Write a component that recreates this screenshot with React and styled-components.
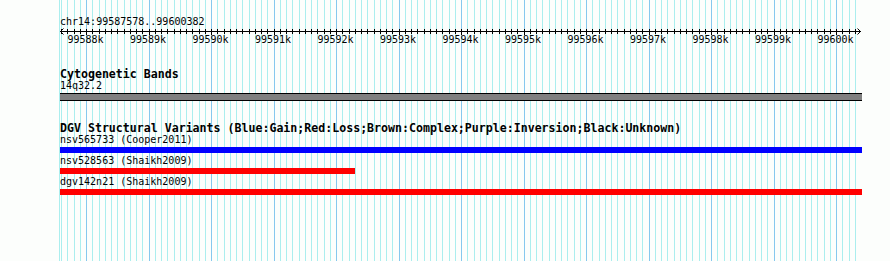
import React from "react";
import styled, { createGlobalStyle } from "styled-components";

const GlobalStyle = createGlobalStyle`
  html, body { margin: 0; padding: 0; background: #fcfefc; }
  body { font-family: "DejaVu Sans Mono", "Liberation Mono", monospace; color: #000; }
`;

const START = 99587578;
const END = 99600382;
const ORIGIN = 60.2;
const BP_PER_PX = 16;
const toX = (bp) => ORIGIN + (bp - START) / BP_PER_PX;

const Stage = styled.div`
  width: 890px;
  height: 261px;
  display: grid;
  overflow: hidden;
  > * { grid-area: 1 / 1; }
`;

const GridSvg = styled.svg`
  display: block;
  width: 890px;
  height: 261px;
`;

const Content = styled.div`
  display: flex;
  flex-direction: column;
  padding: 16px 0 0 60px;
  position: relative;
`;

const Label = styled.div`
  font-size: 10px;
  line-height: 12px;
  height: 12px;
  white-space: nowrap;
  margin-top: ${(p) => p.$mt || 0}px;
`;

const Title = styled.div`
  font-size: 11.6px;
  font-weight: bold;
  line-height: 12px;
  height: 12px;
  white-space: nowrap;
  margin-top: ${(p) => p.$mt || 0}px;
`;

const RulerSvg = styled.svg`
  display: block;
  width: 810px;
  height: 20px;
  margin-left: -2px;
`;

const BandBar = styled.div`
  width: 802px;
  height: 6px;
  margin-top: 1px;
  background: #808080;
  border-top: 1px solid #000;
  border-bottom: 1px solid #000;
`;

const FeatureRow = styled.div`
  display: flex;
  flex-direction: column;
  height: 21px;
`;

const FeatureBar = styled.div`
  height: 6px;
  margin-top: 1px;
  background: ${(p) => p.$color};
`;

function Grid() {
  const lines = [];
  lines.push(<rect key="edge" x={59} y={0} width={1} height={261} fill="#aaeeee" />);
  for (let bp = 99587600; bp <= 99600300; bp += 100) {
    const x = Math.round(toX(bp) - 0.5);
    const major = bp % 1000 === 0;
    lines.push(
      <rect key={bp} x={x} y={0} width={1} height={261} fill={major ? "#86c8ee" : "#aaeeee"} />
    );
  }
  return (
    <GridSvg viewBox="0 0 890 261" shapeRendering="crispEdges">
      {lines}
    </GridSvg>
  );
}

function Ruler() {
  // local coords: x offset -58 (svg starts at page x 58)
  const off = 58;
  const ticks = [];
  const labels = [];
  for (let bp = 99587600; bp <= 99600300; bp += 100) {
    const x = Math.round(toX(bp) - 0.5) - off + 0.5;
    const major = bp % 1000 === 0;
    ticks.push(
      <line key={bp} x1={x} x2={x} y1={major ? 1 : 1} y2={major ? 7 : 6} stroke="#000" strokeWidth="1" />
    );
    if (major) {
      labels.push(
        <text
          key={"l" + bp}
          x={toX(bp) - off - 1}
          y={15}
          textAnchor="middle"
          fontFamily='"DejaVu Sans Mono", "Liberation Mono", monospace'
          fontSize="10"
          fill="#000"
        >
          {bp / 1000 + "k"}
        </text>
      );
    }
  }
  const x0 = 60 - off;
  const x1 = 861 - off;
  return (
    <RulerSvg viewBox="0 0 810 20">
      <g shapeRendering="crispEdges">
        <line x1={x0} x2={x1} y1={3.5} y2={3.5} stroke="#000" strokeWidth="1" />
        {ticks}
      </g>
      <polyline points={`${x0 + 3.5},0.5 ${x0 + 0.5},3.5 ${x0 + 3.5},6.5`} fill="none" stroke="#000" strokeWidth="1" />
      <polyline points={`${x1 - 3.5},0.5 ${x1 - 0.5},3.5 ${x1 - 3.5},6.5`} fill="none" stroke="#000" strokeWidth="1" />
      {labels}
    </RulerSvg>
  );
}

const features = [
  { name: "nsv565733 (Cooper2011)", color: "#0000ff", width: 802 },
  { name: "nsv528563 (Shaikh2009)", color: "#ff0000", width: 295 },
  { name: "dgv142n21 (Shaikh2009)", color: "#ff0000", width: 802 },
];

export default function App() {
  return (
    <>
      <GlobalStyle />
      <Stage>
        <Grid />
        <Content>
          <Label>chr14:{START}..{END}</Label>
          <Ruler />
          <Title $mt={20}>Cytogenetic Bands</Title>
          <Label>14q32.2</Label>
          <BandBar />
          <Title $mt={21}>
            DGV Structural Variants (Blue:Gain;Red:Loss;Brown:Complex;Purple:Inversion;Black:Unknown)
          </Title>
          {features.map((f) => (
            <FeatureRow key={f.name}>
              <Label>{f.name}</Label>
              <FeatureBar $color={f.color} style={{ width: f.width }} />
            </FeatureRow>
          ))}
        </Content>
      </Stage>
    </>
  );
}
